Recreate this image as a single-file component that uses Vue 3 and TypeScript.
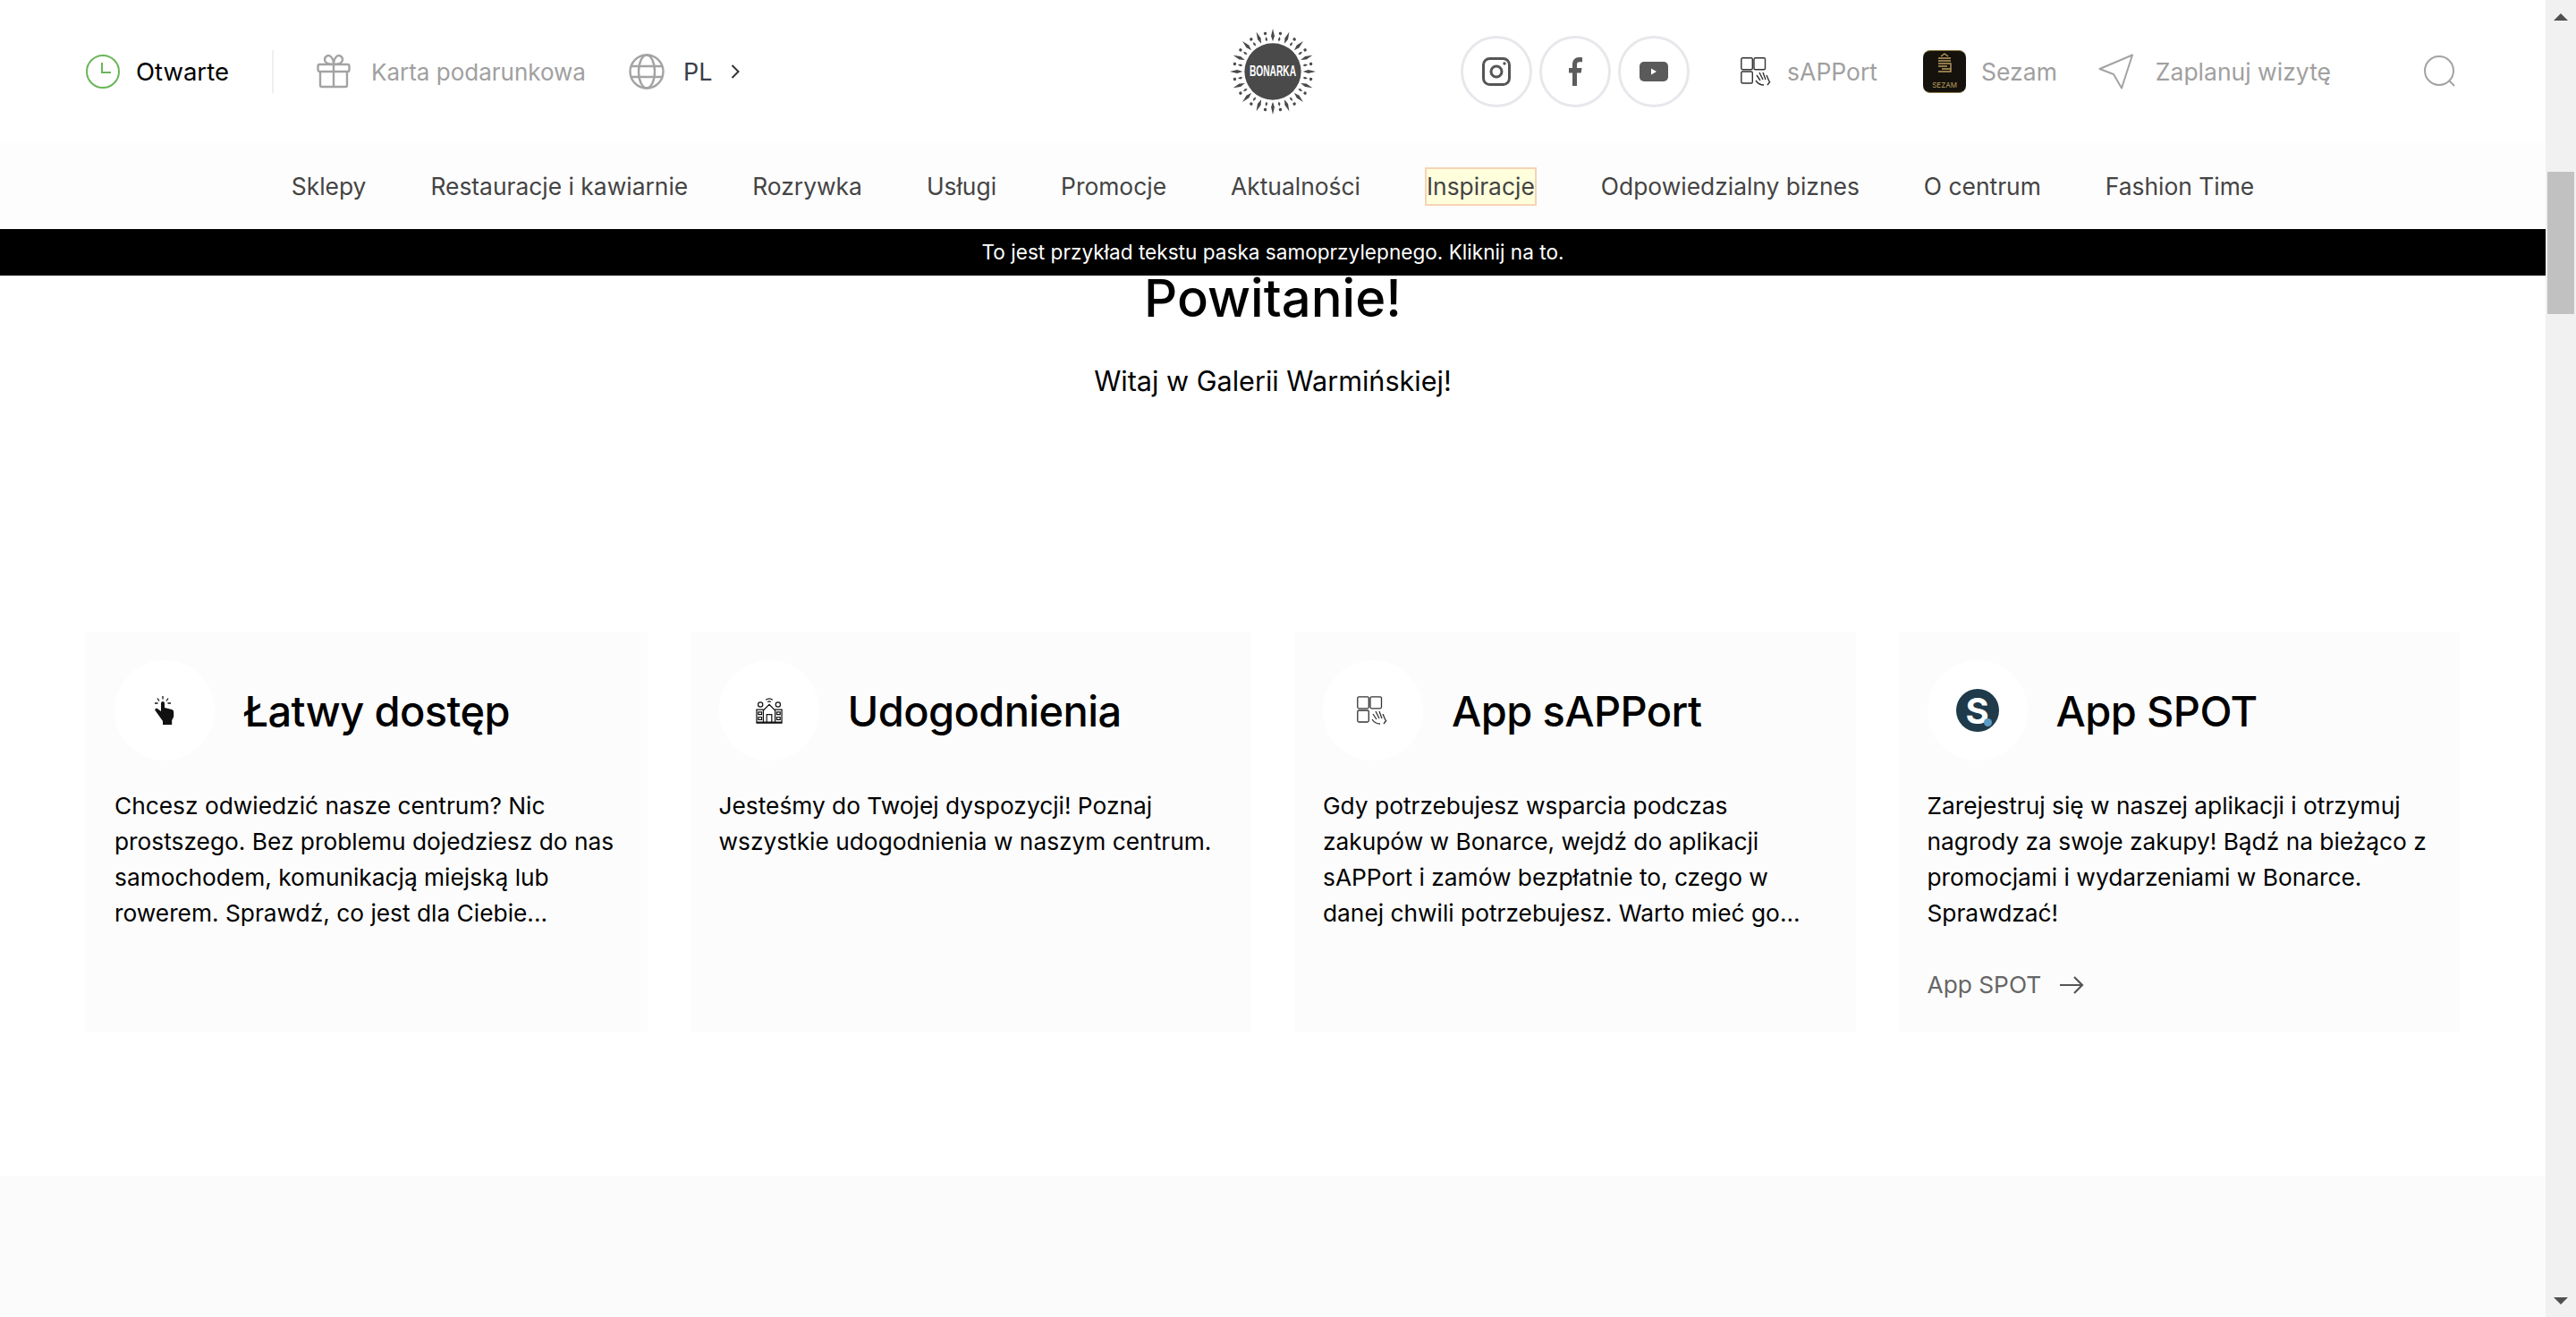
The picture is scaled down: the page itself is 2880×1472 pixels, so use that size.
<template>
  <div class="page">
    <div class="content">
      <header class="top-bar">
        <div class="top-left">
          <div class="top-item status">
            <svg class="ic" width="38" height="38" viewBox="0 0 38 38" fill="none" stroke="#6ab55a" stroke-width="2">
              <circle cx="19" cy="19" r="18" />
              <path d="M18 9v11h10" />
            </svg>
            <span>Otwarte</span>
          </div>
          <span class="divider" />
          <a class="top-item muted gift">
            <svg class="ic" width="38" height="38" viewBox="0 0 38 38" fill="none" stroke="#a3a3a3" stroke-width="2.4">
              <rect x="1.5" y="11" width="35" height="8" rx="2" />
              <path d="M4 19v15a2 2 0 0 0 2 2h26a2 2 0 0 0 2-2V19M19 11v25" />
              <path d="M19 11c-6 0-10-2-10-5.500S13-.5 16 2.500c2 2 3 5 3 8.500 0-3.500 1-6.500 3-8.500 3-3 7-.5 7 3S25 11 19 11z" />
            </svg>
            <span>Karta podarunkowa</span>
          </a>
          <div class="top-item lang">
            <svg class="ic" width="40" height="40" viewBox="0 0 40 40" fill="none" stroke="#a3a3a3" stroke-width="2.400">
              <circle cx="20" cy="20" r="18.500" />
              <ellipse cx="20" cy="20" rx="9" ry="18.500" />
              <path d="M2 14h36M2 26h36" />
            </svg>
            <span class="lang-code">PL</span>
            <svg class="chevron" width="10" height="16" viewBox="0 0 10 16" fill="none" stroke="#333" stroke-width="2">
              <path d="M1.500 1l7 7-7 7" />
            </svg>
          </div>
        </div>

        <div class="logo">
          <svg width="96" height="96" viewBox="0 0 94 94">
            <g fill="#4a4a4a">
              <g v-for="ray in logoRays" :key="ray.angle" :transform="`rotate(${ray.angle} 47 47)`">
                <path v-if="ray.long" d="M47 0l1.900 8L47 14l-1.900-6z" />
                <template v-else>
                  <circle cx="47" cy="4.500" r="1.700" />
                  <path d="M47 8l1.300 3-1.300 2.500-1.300-2.500z" />
                </template>
              </g>
            </g>
            <circle cx="47" cy="47" r="31" fill="#4a4a4a" />
          </svg>
          <span class="logo-text">BONARKA</span>
        </div>

        <div class="top-right">
          <div class="socials">
            <a class="social">
              <svg width="32" height="32" viewBox="0 0 32 32" fill="none" stroke="#555" stroke-width="3">
                <rect x="1.500" y="1.500" width="29" height="29" rx="7" />
                <circle cx="16" cy="16" r="6" />
                <circle cx="25" cy="7" r="1.700" fill="#555" stroke="none" />
              </svg>
            </a>
            <a class="social">
              <svg width="16" height="32" viewBox="0 0 16 32" fill="#5c5c5c">
                <path d="M5 32V17.500H1v-5.500h4V8c0-5 3-8 7.500-8 1.500 0 2.800.100 3.500.200v5H13c-2.200 0-3 1-3 3V12h5.500l-.8 5.500H10V32z" />
              </svg>
            </a>
            <a class="social">
              <svg width="32" height="24" viewBox="0 0 32 24">
                <rect width="32" height="22" y="1" rx="5" fill="#5a5a5a" />
                <path d="M13 8.500l6 3.500-6 3.500z" fill="#fff" />
              </svg>
            </a>
          </div>
          <a class="top-item muted sapport">
            <svg class="ic" width="36" height="32" viewBox="0 0 36 32" fill="none" stroke="#333" stroke-width="1.400">
              <rect x=".8" y=".8" width="12.500" height="13" rx="1.500" />
              <rect x="15" y=".8" width="12.500" height="13" rx="1.500" />
              <rect x=".8" y="16" width="12.500" height="13" rx="1.500" />
              <path d="M18 20l4 6M21 17l4 8M25 17l3 8M29 20l3 7M17 26c2 3 5 5 9 5M33 27l-3 4" />
            </svg>
            <span>sAPPort</span>
          </a>
          <a class="top-item muted sezam">
            <span class="sezam-badge">
              <svg width="20" height="26" viewBox="0 0 20 26" fill="none" stroke="#b99c5c" stroke-width="1.400">
                <path d="M6 4l4-3 4 3M3 6h14M3 9h14M3 12h14v9H3M3 15h10M7 18h10" />
              </svg>
              <small>SEZAM</small>
            </span>
            <span>Sezam</span>
          </a>
          <a class="top-item muted plan">
            <svg class="ic" width="40" height="40" viewBox="0 0 40 40" fill="none" stroke="#a3a3a3" stroke-width="2" stroke-linejoin="round">
              <path d="M38 1.500L1.500 17 17 23l9 15.500z" />
            </svg>
            <span>Zaplanuj wizytę</span>
          </a>
          <a class="search">
            <svg width="36" height="36" viewBox="0 0 36 36" fill="none" stroke="#a3a3a3" stroke-width="2">
              <circle cx="17" cy="17" r="16" />
              <path d="M28.500 28.500l5.500 5.500" />
            </svg>
          </a>
        </div>
      </header>

      <nav class="main-nav">
        <a v-for="item in navItems" :key="item" class="nav-link" :class="{ highlighted: item === 'Inspiracje' }">{{ item }}</a>
      </nav>

      <div class="sticky-bar">To jest przykład tekstu paska samoprzylepnego. Kliknij na to.</div>

      <section class="welcome">
        <h1>Powitanie!</h1>
        <p>Witaj w Galerii Warmińskiej!</p>
      </section>

      <section class="cards">
        <article v-for="card in cards" :key="card.title" class="card">
          <div class="card-head">
            <div class="icon-circle">
              <svg v-if="card.icon === 'tap'" width="22" height="32" viewBox="0 0 22 32">
                <g fill="none" stroke="#111" stroke-width="1.300">
                  <path d="M9 0v3.500M3 2.500l2 3M15 2.500l-2 3M0 8h3.500M18 8h-3.500" />
                </g>
                <path d="M7 8a2 2 0 0 1 4 0v5l8 2c1.500.400 2.200 1.200 2.200 3v5l-2 4v5H9v-4L.5 16c-.8-1.500.8-3 2.500-2l4 3z" fill="#111" />
              </svg>
              <svg v-else-if="card.icon === 'building'" width="30" height="30" viewBox="0 0 32 32" fill="none" stroke="#111" stroke-width="1.300">
                <circle cx="5.500" cy="9" r="2.800" />
                <circle cx="26.500" cy="9" r="2.800" />
                <path d="M12 3.500c2.500-2 5.500-2 8 0M14 6c1.300-1 2.700-1 4 0" />
                <path d="M9 16l7-7 7 7M1 15h8v15H1zM23 15h8v15h-8zM9 16v14h14V16M13 30v-9h6v9M.5 31h31" />
                <path d="M3 18h4v3H3zM3 24h4v3H3zM25 18h4v3h-4zM25 24h4v3h-4z" />
              </svg>
              <svg v-else-if="card.icon === 'apps'" width="36" height="32" viewBox="0 0 36 32" fill="none" stroke="#333" stroke-width="1.300">
                <rect x=".8" y=".8" width="12.500" height="13" rx="1.500" />
                <rect x="15" y=".8" width="12.500" height="13" rx="1.500" />
                <rect x=".8" y="16" width="12.500" height="13" rx="1.500" />
                <path d="M18 20l4 6M21 17l4 8M25 17l3 8M29 20l3 7M17 26c2 3 5 5 9 5M33 27l-3 4" />
              </svg>
              <span v-else class="spot-mark">S<i /></span>
            </div>
            <h2>{{ card.title }}</h2>
          </div>
          <p class="card-text">{{ card.text }}</p>
          <a v-if="card.link" class="card-link">
            {{ card.link }}
            <svg width="28" height="22" viewBox="0 0 28 22" fill="none" stroke="#555" stroke-width="2.200">
              <path d="M1 11h25M17 2l9 9-9 9" />
            </svg>
          </a>
        </article>
      </section>

      <section class="next-section" />
    </div>

    <div class="scrollbar">
      <span class="arrow up" />
      <div class="thumb-track"><div class="thumb" /></div>
      <span class="arrow down" />
    </div>
  </div>
</template>

<script setup lang="ts">
interface Card {
  icon: 'tap' | 'building' | 'apps' | 'spot'
  title: string
  text: string
  link?: string
}

const navItems = [
  'Sklepy',
  'Restauracje i kawiarnie',
  'Rozrywka',
  'Usługi',
  'Promocje',
  'Aktualności',
  'Inspiracje',
  'Odpowiedzialny biznes',
  'O centrum',
  'Fashion Time',
]

const logoRays = Array.from({ length: 32 }, (_, i) => ({
  angle: i * 11.25,
  long: i % 2 === 0,
}))

const cards: Card[] = [
  {
    icon: 'tap',
    title: 'Łatwy dostęp',
    text: 'Chcesz odwiedzić nasze centrum? Nic\nprostszego. Bez problemu dojedziesz do nas\nsamochodem, komunikacją miejską lub\nrowerem. Sprawdź, co jest dla Ciebie...',
  },
  {
    icon: 'building',
    title: 'Udogodnienia',
    text: 'Jesteśmy do Twojej dyspozycji! Poznaj\nwszystkie udogodnienia w naszym centrum.',
  },
  {
    icon: 'apps',
    title: 'App sAPPort',
    text: 'Gdy potrzebujesz wsparcia podczas\nzakupów w Bonarce, wejdź do aplikacji\nsAPPort i zamów bezpłatnie to, czego w\ndanej chwili potrzebujesz. Warto mieć go...',
  },
  {
    icon: 'spot',
    title: 'App SPOT',
    text: 'Zarejestruj się w naszej aplikacji i otrzymuj\nnagrody za swoje zakupy! Bądź na bieżąco z\npromocjami i wydarzeniami w Bonarce.\nSprawdzać!',
    link: 'App SPOT',
  },
]
</script>

<style>
html,
body {
  margin: 0;
  overflow: hidden;
}
</style>

<style scoped>
.page {
  display: flex;
  width: 2880px;
  height: 1472px;
  overflow: hidden;
  background: #fff;
  font-family: Inter, 'Noto Sans', sans-serif;
  color: #000;
}

.content {
  flex: 1;
  min-width: 0;
}

.top-bar {
  display: grid;
  grid-template-columns: 1fr auto 1fr;
  align-items: center;
  height: 160px;
  padding: 0 96px;
  font-size: 26px;
}

.top-left,
.top-right,
.top-item {
  display: flex;
  align-items: center;
}

.top-item {
  gap: 20px;
}

.ic {
  flex: none;
}

.status {
  gap: 18px;
  font-size: 27.5px;
}

.divider {
  width: 2px;
  height: 48px;
  margin: 0 48px;
  background: #efefef;
}

.muted {
  color: #a0a0a0;
}

.gift {
  gap: 23px;
}

.lang {
  margin-left: 48px;
  gap: 21px;
  font-size: 27px;
  color: #3a3d4a;
}

.logo {
  position: relative;
  width: 96px;
  height: 96px;
}

.logo svg {
  display: block;
}

.logo-text {
  position: absolute;
  top: 50%;
  left: 50%;
  transform: translate(-50%, -50%) scaleX(0.6);
  font-family: 'Liberation Sans', sans-serif;
  font-size: 17px;
  font-weight: 700;
  color: #fff;
}

.top-right {
  justify-content: flex-end;
  font-size: 26.5px;
}

.socials {
  display: flex;
  gap: 8px;
  margin-right: 57px;
}

.social {
  display: flex;
  align-items: center;
  justify-content: center;
  box-sizing: border-box;
  width: 80px;
  height: 80px;
  border: 3px solid #e7e8ec;
  border-radius: 50%;
}

.sapport {
  gap: 16px;
  margin-right: 51px;
}

.sezam {
  margin-right: 46px;
  gap: 17px;
}

.plan {
  gap: 24px;
}

.sezam-badge {
  display: flex;
  flex-direction: column;
  align-items: center;
  justify-content: space-between;
  box-sizing: border-box;
  width: 48px;
  height: 48px;
  padding: 2px 0 3px;
  border-top: 1px solid #8f7a45;
  border-bottom: 1px solid #8f7a45;
  border-radius: 8px;
  background: #15120d;
}

.sezam-badge small {
  font-size: 8px;
  line-height: 9px;
  color: #b99c5c;
}

.search {
  display: flex;
  margin: 0 4px 0 104px;
}

.main-nav {
  display: flex;
  justify-content: center;
  align-items: center;
  gap: 72px;
  height: 96px;
  background: #fdfdfd;
  font-size: 26.4px;
  color: #444;
}

.highlighted {
  box-sizing: border-box;
  height: 43px;
  padding: 2px 2px 0;
  line-height: 39px;
  background: #ffffdc;
  box-shadow: inset 0 2px 0 #f6d3b5, inset 2px 0 0 #f6d3b5, inset -2px 0 0 #f6d3b5, inset 0 -2px 0 #f6d3b5;
}

.sticky-bar {
  height: 52px;
  line-height: 52px;
  background: #000;
  color: #fff;
  text-align: center;
  font-size: 22.6px;
}

.welcome {
  height: 398px;
  text-align: center;
}

.welcome h1 {
  margin: 0;
  font-size: 58px;
  line-height: 50px;
  font-weight: 500;
}

.welcome p {
  margin: 48px 0 0;
  font-size: 30.6px;
  line-height: 40px;
}

.cards {
  display: grid;
  grid-template-columns: repeat(4, 1fr);
  gap: 48px;
  height: 448px;
  padding: 0 96px;
}

.card {
  box-sizing: border-box;
  padding: 32px;
  background: #fcfcfc;
}

.card-head {
  display: flex;
  align-items: center;
  gap: 32px;
}

.icon-circle {
  display: flex;
  flex: none;
  align-items: center;
  justify-content: center;
  width: 112px;
  height: 112px;
  border-radius: 50%;
  background: #fff;
}

.card h2 {
  margin: 0;
  font-size: 47px;
  font-weight: 500;
  letter-spacing: -0.6px;
}

.card-text {
  margin: 31px 0 0;
  font-size: 26.3px;
  line-height: 40px;
  white-space: pre-line;
}

.card-link {
  display: flex;
  align-items: center;
  gap: 20px;
  margin-top: 40px;
  font-size: 26.3px;
  line-height: 40px;
  color: #666;
}

.spot-mark {
  position: relative;
  display: flex;
  align-items: center;
  justify-content: center;
  width: 48px;
  height: 48px;
  border-radius: 50%;
  background: #1f3a4a;
  font-size: 40px;
  font-weight: 700;
  color: #fff;
}

.spot-mark i {
  position: absolute;
  right: 8px;
  bottom: 6px;
  width: 9px;
  height: 9px;
  border-radius: 50%;
  background: #5b9bc4;
}

.next-section {
  height: 158px;
  margin-top: 160px;
  background: #fbfbfb;
}

.scrollbar {
  display: flex;
  flex: none;
  flex-direction: column;
  align-items: center;
  width: 34px;
  background: #f1f1f1;
}

.thumb-track {
  flex: 1;
  width: 30px;
  padding-top: 169px;
}

.thumb {
  height: 159px;
  background: #c1c1c1;
}

.arrow {
  width: 0;
  height: 0;
  border-left: 8px solid transparent;
  border-right: 8px solid transparent;
}

.arrow.up {
  margin-top: 15px;
  border-bottom: 8px solid #505050;
}

.arrow.down {
  margin-bottom: 14px;
  border-top: 8px solid #505050;
}
</style>
